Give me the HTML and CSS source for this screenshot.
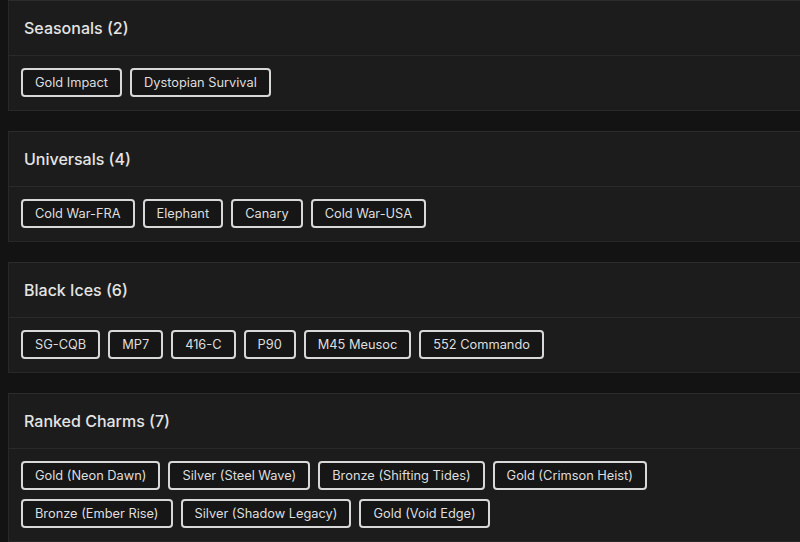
FILE: index.html
```html
<!DOCTYPE html>
<html>
<head>
<meta charset="utf-8">
<link rel="stylesheet" href="styles.css">
</head>
<body>
<div class="list">
  <section class="card">
    <h2 class="card-head">Seasonals (2)</h2>
    <div class="card-body">
      <span class="tag">Gold Impact</span>
      <span class="tag">Dystopian Survival</span>
    </div>
  </section>
  <section class="card">
    <h2 class="card-head">Universals (4)</h2>
    <div class="card-body">
      <span class="tag">Cold War-FRA</span>
      <span class="tag">Elephant</span>
      <span class="tag">Canary</span>
      <span class="tag">Cold War-USA</span>
    </div>
  </section>
  <section class="card">
    <h2 class="card-head">Black Ices (6)</h2>
    <div class="card-body">
      <span class="tag">SG-CQB</span>
      <span class="tag">MP7</span>
      <span class="tag">416-C</span>
      <span class="tag">P90</span>
      <span class="tag">M45 Meusoc</span>
      <span class="tag">552 Commando</span>
    </div>
  </section>
  <section class="card">
    <h2 class="card-head">Ranked Charms (7)</h2>
    <div class="card-body">
      <span class="tag">Gold (Neon Dawn)</span>
      <span class="tag">Silver (Steel Wave)</span>
      <span class="tag">Bronze (Shifting Tides)</span>
      <span class="tag">Gold (Crimson Heist)</span>
      <span class="tag">Bronze (Ember Rise)</span>
      <span class="tag">Silver (Shadow Legacy)</span>
      <span class="tag">Gold (Void Edge)</span>
    </div>
  </section>
</div>
</body>
</html>
```

FILE: styles.css
```css
html, body {
  margin: 0;
  padding: 0;
  background: #131313;
  overflow: hidden;
  height: 542px;
}
body {
  font-family: Inter, "Noto Sans", sans-serif;
  color: #e2e2e2;
}
.list {
  padding-left: 8px;
  width: 840px;
  display: flex;
  flex-direction: column;
  gap: 20px;
}
.card {
  background: #1c1c1c;
  border: 1px solid #282828;
  border-top-color: #2c2c2c;
}
.card-head {
  margin: 0;
  padding: 16px 15px;
  height: 22px;
  line-height: 22px;
  font-size: 16px;
  font-weight: 500;
  color: #e4e4e4;
  border-bottom: 1px solid #2a2a2a;
}
.card-body {
  padding: 12px 12px 13px;
  display: flex;
  flex-wrap: wrap;
  gap: 9px 8px;
  max-width: 680px;
}
.tag {
  display: inline-block;
  border: 2px solid #d8d8d8;
  border-radius: 4px;
  background: #161616;
  padding: 5px 12px;
  font-size: 12.8px;
  line-height: 15px;
  color: #dedede;
}
```
